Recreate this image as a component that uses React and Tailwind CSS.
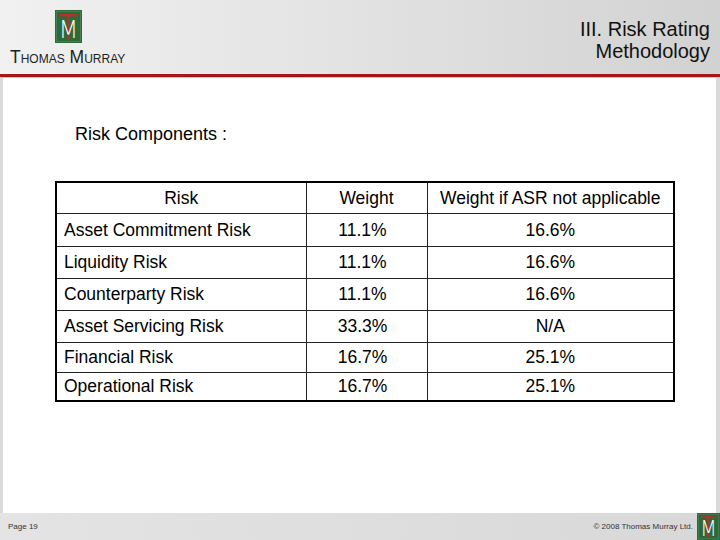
import React from 'react';

const rows = [
  { risk: 'Asset Commitment Risk', weight: '11.1%', alt: '16.6%', h: 'h-[33px]' },
  { risk: 'Liquidity Risk', weight: '11.1%', alt: '16.6%', h: 'h-[32px]' },
  { risk: 'Counterparty Risk', weight: '11.1%', alt: '16.6%', h: 'h-[32px]' },
  { risk: 'Asset Servicing Risk', weight: '33.3%', alt: 'N/A', h: 'h-[32px]' },
  { risk: 'Financial Risk', weight: '16.7%', alt: '25.1%', h: 'h-[30px]' },
  { risk: 'Operational Risk', weight: '16.7%', alt: '25.1%', h: 'h-[29px]' }
];

const TmLogo = ({ className }) => (
  <svg viewBox="0 0 28 34" className={className} preserveAspectRatio="none">
    <rect x="0" y="0" width="28" height="34" fill="#2c6a3a" />
    <rect x="1.5" y="1.5" width="25" height="31" fill="none" stroke="#5d8d68" strokeWidth="0.6" />
    <rect x="5" y="4" width="18" height="2.6" fill="#b8302c" />
    <rect x="12.8" y="4" width="2.4" height="27" fill="#b8302c" />
    <text
      x="14"
      y="29"
      textAnchor="middle"
      fill="#ffffff"
      fontSize="26"
      fontFamily="'DejaVu Sans', sans-serif"
      fontWeight="200"
      transform="scale(1 1)"
      textLength="20"
      lengthAdjust="spacingAndGlyphs"
      style={{ fontStretch: 'condensed' }}
    >
      M
    </text>
  </svg>
);

const App = () => {
  return (
    <div
      className="w-[720px] h-[540px] flex flex-col overflow-hidden bg-white text-black"
      style={{ fontFamily: "'Liberation Sans', Arial, sans-serif" }}
    >
      {/* header */}
      <div className="h-[74px] flex justify-between bg-gradient-to-r from-[#f1f1f1] via-[#e2e2e2] to-[#d2d2d2]">
        <div className="flex flex-col items-start">
          <TmLogo className="ml-[55px] mt-[10px] w-[27px] h-[33px]" />
          <div
            className="ml-[10px] mt-[4px] text-[17.5px] leading-[20px] text-[#1e1e1e]"
            style={{ fontVariant: 'small-caps' }}
          >
            Thomas Murray
          </div>
        </div>
        <div className="pr-[10px] pt-[18px] text-right text-[20px] leading-[22px] text-[#111]">
          <div>III. Risk Rating</div>
          <div>Methodology</div>
        </div>
      </div>
      <div className="h-[3px] bg-[#a3171a]" />
      <div className="h-[1px] bg-[#e9b9b9]" />

      {/* content */}
      <div className="flex-1 flex bg-[#dadada]">
        <div className="flex-1 ml-[3px] mr-[4px] bg-white">
          <div className="ml-[72px] mt-[46px] text-[18px] leading-[21px]">Risk Components :</div>
          <table className="ml-[52px] mt-[36px] w-[618px] border-collapse border-2 border-black text-[17.5px] leading-[20px] table-fixed">
            <colgroup>
              <col className="w-[250px]" />
              <col className="w-[121px]" />
              <col className="w-[247px]" />
            </colgroup>
            <thead>
              <tr className="h-[31px]">
                <th className="font-normal text-center border border-[#222]">Risk</th>
                <th className="font-normal text-center border border-[#222]">Weight</th>
                <th className="font-normal text-center border border-[#222]">Weight if ASR not applicable</th>
              </tr>
            </thead>
            <tbody>
              {rows.map((r, idx) => (
                <tr key={idx} className={r.h}>
                  <td className="pl-[7px] text-left border border-[#222]">{r.risk}</td>
                  <td className="pr-[8px] text-center border border-[#222]">{r.weight}</td>
                  <td className="text-center border border-[#222]">{r.alt}</td>
                </tr>
              ))}
            </tbody>
          </table>
        </div>
      </div>

      {/* footer */}
      <div className="h-[27px] flex items-center bg-gradient-to-r from-[#e4e4e4] to-[#d8d8d8] text-[#333]">
        <div className="ml-[8px] text-[8px] leading-[10px]">Page 19</div>
        <div className="ml-auto mr-[4px] text-[8px] leading-[10px]">© 2008 Thomas Murray Ltd.</div>
        <TmLogo className="w-[23px] h-[27px]" />
      </div>
    </div>
  );
};

export default App;
